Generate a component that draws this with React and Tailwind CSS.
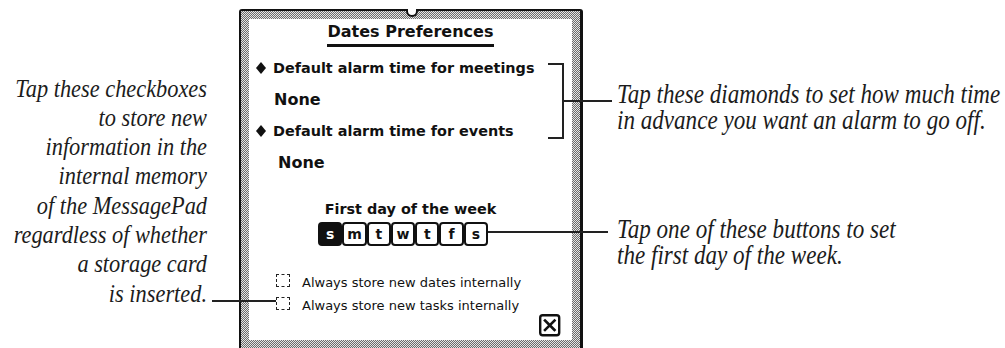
import React from 'react';

const leftNote = [
  'Tap these checkboxes',
  'to store new',
  'information in the',
  'internal memory',
  'of the MessagePad',
  'regardless of whether',
  'a storage card',
  'is inserted.',
];

const days = ['s', 'm', 't', 'w', 't', 'f', 's'];

function Diamond() {
  return (
    <svg width="10" height="12" viewBox="0 0 10 12" className="shrink-0">
      <polygon points="5,0 10,6 5,12 0,6" fill="#111" />
    </svg>
  );
}

function CloseBox() {
  return (
    <svg width="22" height="23" viewBox="0 0 22 23">
      <rect x="1.2" y="1.2" width="19" height="20" rx="2.5" fill="white" stroke="#111" strokeWidth="2.4" />
      <path d="M6 6.5 L15.5 16 M15.5 6.5 L6 16" stroke="#111" strokeWidth="2.6" strokeLinecap="square" />
    </svg>
  );
}

function Checkbox({ label }) {
  return (
    <div className="flex h-[23px] items-start">
      <div className="mt-[3px] h-[13px] w-[14px] shrink-0 border border-dashed border-[#222]" />
      <span className="ml-[12px] text-[13px] leading-[23px] whitespace-nowrap">{label}</span>
    </div>
  );
}

export default function App() {
  return (
    <div className="relative flex h-[348px] w-[1005px] items-start overflow-hidden bg-white text-[#1c1c1c]">
      {/* nota izquierda */}
      <div className="ml-[-93px] flex w-[300px] shrink-0 origin-right scale-x-[0.86] flex-col items-end pt-[73.6px] font-['Liberation_Serif'] text-[26px] leading-[29.3px] italic">
        {leftNote.map((l) => (
          <span key={l} className="block whitespace-nowrap">{l}</span>
        ))}
      </div>

      {/* panel Newton */}
      <div className="relative mt-[9px] ml-[32px] h-[345px] w-[344px] shrink-0 rounded-t-[3px] border-t-2 border-r-[3px] border-l-2 border-[#111] bg-[image:repeating-conic-gradient(#6b6b6b_0%_25%,#e4e4e4_0%_50%)] bg-size-[2px_2px] p-2">
        <div className="absolute top-[-2px] left-[165px] h-[8px] w-[12px] rounded-b-full border-2 border-t-0 border-[#111] bg-white" />
        <div className="h-[321px] bg-white font-['DejaVu_Sans'] text-[#111]">
          <div className="pt-[1px] text-center">
            <span className="inline-block border-b-[3px] border-[#111] px-[1px] pb-[2px] text-[16px] leading-[20px] font-bold">
              Dates Preferences
            </span>
          </div>

          <div className="mt-[12px] flex h-[18px] items-center pl-[7px]">
            <Diamond />
            <span className="ml-[7px] text-[14.4px] leading-[18px] font-bold whitespace-nowrap">Default alarm time for meetings</span>
          </div>
          <div className="mt-[12.5px] pl-[25px] text-[16px] leading-[20px] font-bold">None</div>

          <div className="mt-[12.5px] flex h-[18px] items-center pl-[7px]">
            <Diamond />
            <span className="ml-[7px] text-[14.4px] leading-[18px] font-bold whitespace-nowrap">Default alarm time for events</span>
          </div>
          <div className="mt-[13px] pl-[29px] text-[16px] leading-[20px] font-bold">None</div>

          <div className="mt-[27px] text-center text-[14.4px] leading-[18px] font-bold">First day of the week</div>
          <div className="mt-[4px] flex pl-[69px]">
            {days.map((d, i) => (
              <div
                key={i}
                className={
                  i === 0
                    ? 'flex h-[24px] w-[24.3px] items-center justify-center rounded-[4px] border-2 border-[#111] bg-[#111] text-[14px] leading-none font-bold text-white'
                    : 'flex h-[24px] w-[24.3px] items-center justify-center rounded-[4px] border-2 border-[#111] text-[14px] leading-none font-bold'
                }
              >
                {d}
              </div>
            ))}
          </div>

          <div className="mt-[25px] flex items-start pl-[27px]">
            <div>
              <Checkbox label="Always store new dates internally" />
              <Checkbox label="Always store new tasks internally" />
            </div>
            <div className="mt-[43px] mr-[11px] ml-auto">
              <CloseBox />
            </div>
          </div>
        </div>
      </div>

      {/* notas derecha */}
      <div className="ml-[34px] flex shrink-0 origin-left scale-x-[0.855] flex-col font-['Liberation_Serif'] text-[27px] leading-[26.5px] italic">
        <div className="mt-[80.6px]">
          <div className="whitespace-nowrap">Tap these diamonds to set how much time</div>
          <div className="whitespace-nowrap">in advance you want an alarm to go off.</div>
        </div>
        <div className="mt-[82px]">
          <div className="whitespace-nowrap">Tap one of these buttons to set</div>
          <div className="whitespace-nowrap">the first day of the week.</div>
        </div>
      </div>

      {/* líneas guía */}
      <div className="absolute top-[300px] left-[212px] h-[2px] w-[64px] bg-[#222]" />
      <div className="absolute top-[63px] left-[548px] h-[76px] w-[16px] border-y-2 border-r-2 border-[#222]" />
      <div className="absolute top-[100px] left-[564px] h-[2px] w-[48px] bg-[#222]" />
      <div className="absolute top-[231px] left-[488px] h-[2px] w-[120px] bg-[#222]" />
    </div>
  );
}
